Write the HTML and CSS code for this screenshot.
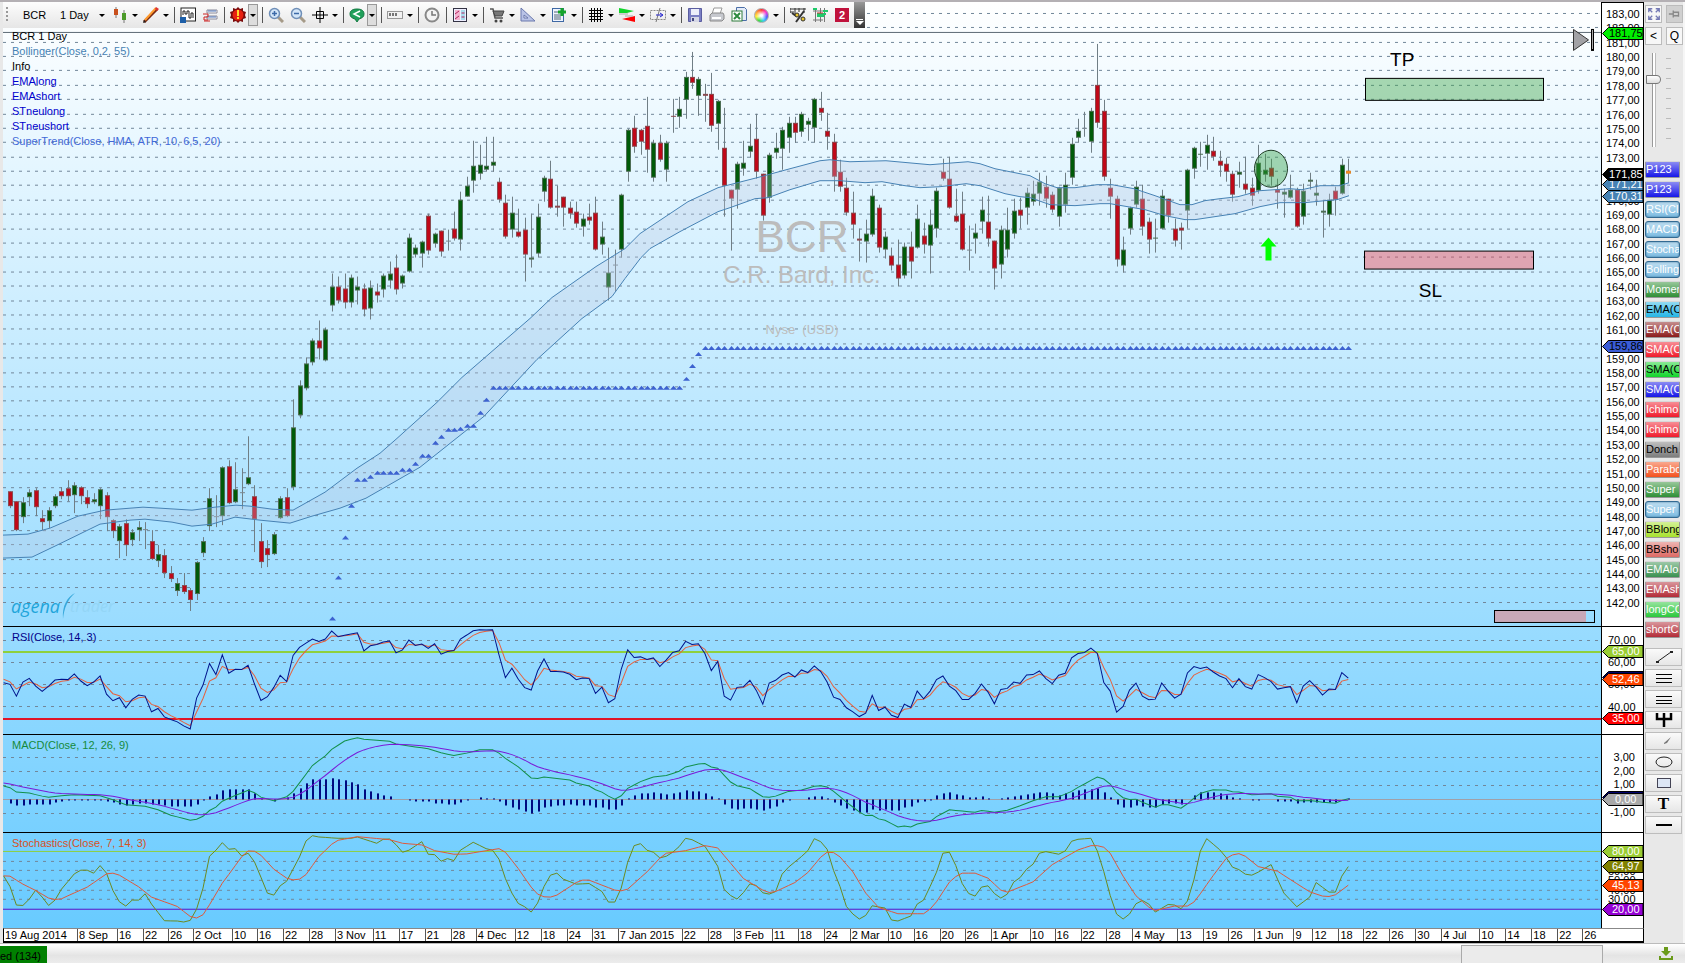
FILE: index.html
```html
<!DOCTYPE html>
<html lang="en">
<head>
  <meta charset="UTF-8" />
  <meta name="viewport" content="width=device-width, initial-scale=1.0"/>
  <title>BCR 1 Day - AgenaTrader</title>
  <link rel="stylesheet" href="styles.css">
</head>
<body>

  <div class="workspace">
    <main class="chart">

      <!-- Toolbar floats over the price pane -->
      <div class="toolbar" role="toolbar" aria-label="Chart toolbar">
        <span class="grip"></span>
        <input class="symbol" type="text" value="BCR" aria-label="Symbol">
        <button class="period">1 Day</button>
        <button class="drop period-drop" aria-label="Period"></button>

        <span class="split"><button class="tool" aria-label="Chart style"><svg viewBox="0 0 16 16"><path d="M4 0v11M12 3v13" stroke="#777"/><rect x="2" y="2" width="4" height="6" fill="#c8501e"/><rect x="10" y="6" width="4" height="7" fill="#4c9a2a"/></svg></button><button class="drop" aria-label="More chart styles"></button></span>
        <span class="split"><button class="tool" aria-label="Draw"><svg viewBox="0 0 16 16"><path d="M1 15L14 2" stroke="#7a2a12" stroke-width="3"/><path d="M2 13L13 1" stroke="#ff9a2e" stroke-width="2"/><path d="M0 16l3-1-2-2z" fill="#222"/><path d="M13 0l3 2-2 2-2-2z" fill="#d33"/></svg></button><button class="drop" aria-label="More drawing tools"></button></span>
        <i class="sep"></i>
        <button class="tool" aria-label="Indicators"><svg viewBox="0 0 16 16"><rect x="1" y="1" width="14.500" height="13" fill="#fff" stroke="#222"/><path d="M3 8V4h2v3h2V4h2v7h2V6h2v5" fill="none" stroke="#222"/><rect x="0" y="10" width="6" height="6" fill="#1d5fa8"/></svg></button>
        <button class="tool" aria-label="Strategies"><svg viewBox="0 0 16 16"><path d="M5 3h10v3H5zM5 9h10v3H5z" fill="#fff" stroke="#889"/><path d="M6 4h8M6 10h8" stroke="#4a72b8"/><path d="M1 7h5v3H2v3h4M2 14h6" fill="none" stroke="#c22"/></svg></button>
        <i class="sep"></i>
        <span class="split"><button class="tool" aria-label="Alerts"><svg viewBox="0 0 16 16"><path d="M8 0l2 2 3-1 0 3 3 1-1 3 1 3-3 1 0 3-3-1-2 2-2-2-3 1 0-3-3-1 1-3-1-3 3-1 0-3 3 1z" fill="#7a0c0c"/><circle cx="8" cy="8" r="5.500" fill="#e82010"/><path d="M8 3v6M8 10v2" stroke="#ffd92e" stroke-width="2"/></svg></button><button class="drop boxed" aria-label="Alert options"></button></span>
        <i class="sep"></i>
        <button class="tool" aria-label="Zoom in"><svg viewBox="0 0 16 16"><path d="M10 10l5 5" stroke="#a59a88" stroke-width="3"/><circle cx="6.500" cy="6.500" r="5" fill="#d3e6f8" stroke="#6f8fb8" stroke-width="1.500"/><path d="M4 6.500h5M6.500 4v5" stroke="#3c6aa8" stroke-width="1.500"/></svg></button>
        <button class="tool" aria-label="Zoom out"><svg viewBox="0 0 16 16"><path d="M10 10l5 5" stroke="#a59a88" stroke-width="3"/><circle cx="6.500" cy="6.500" r="5" fill="#d3e6f8" stroke="#6f8fb8" stroke-width="1.500"/><path d="M4 6.500h5" stroke="#3c6aa8" stroke-width="1.500"/></svg></button>
        <span class="split"><button class="tool" aria-label="Crosshair"><svg viewBox="0 0 16 16"><path d="M8 0v16M0 8h16" stroke="#000"/><path d="M4.500 4.500h7v7h-7z" fill="none" stroke="#000"/></svg></button><button class="drop" aria-label="Crosshair options"></button></span>
        <i class="sep"></i>
        <span class="split"><button class="tool" aria-label="Share"><svg viewBox="0 0 16 16"><path d="M8 2c5 0 7 2 7 5s-2 4-5 5l-2 3-2-3c-3-1-5-2-5-5s2-5 7-5z" fill="#1fa05a" stroke="#157a43"/><path d="M11 4L5 7l6 3" fill="none" stroke="#fff" stroke-width="1.500"/></svg></button><button class="drop boxed" aria-label="Share options"></button></span>
        <i class="sep"></i>
        <span class="split"><button class="tool" aria-label="Bar spacing"><svg viewBox="0 0 16 16"><rect x=".5" y="4.500" width="15" height="7" fill="#f2f2f2" stroke="#999"/><path d="M3 6v3M6 6v3M9 6v3" stroke="#777" stroke-width="2"/></svg></button><button class="drop" aria-label="Spacing options"></button></span>
        <i class="sep"></i>
        <button class="tool" aria-label="Time"><svg viewBox="0 0 16 16"><circle cx="8" cy="8" r="6.500" fill="#f4f4f4" stroke="#888" stroke-width="2"/><path d="M8 4v4h4" fill="none" stroke="#777" stroke-width="1.500"/></svg></button>
        <i class="sep"></i>
        <span class="split"><button class="tool" aria-label="Templates"><svg viewBox="0 0 16 16"><rect x="1.500" y="1.500" width="13" height="13" fill="#eef" stroke="#334"/><rect x="3" y="3" width="5" height="10" fill="#f2b4d0"/><rect x="9" y="3" width="4" height="10" fill="#a9dcec"/><path d="M3 7l4-3M3 12l4-3M9.500 6h3M9.500 10h3" stroke="#b2225e"/></svg></button><button class="drop" aria-label="More templates"></button></span>
        <i class="sep"></i>
        <span class="split"><button class="tool" aria-label="Orders"><svg viewBox="0 0 16 16"><path d="M1 2h3l2 9h8" fill="none" stroke="#555" stroke-width="1.500"/><path d="M4 4h11l-2 5H6z" fill="#777" stroke="#444"/><circle cx="7" cy="14" r="1.500" fill="#444"/><circle cx="12" cy="14" r="1.500" fill="#444"/></svg></button><button class="drop" aria-label="Order options"></button></span>
        <span class="split"><button class="tool" aria-label="Measure"><svg viewBox="0 0 16 16"><path d="M1 1v13h14z" fill="#b9c3e6" stroke="#6a78ad"/><path d="M4 8v3h4z" fill="#f4f5fb" stroke="#6a78ad"/></svg></button><button class="drop" aria-label="Measure options"></button></span>
        <span class="split"><button class="tool" aria-label="Add note"><svg viewBox="0 0 16 16"><rect x="1.500" y="1.500" width="11" height="13" fill="#eef4ff" stroke="#3e68a4"/><path d="M3 5h5M3 8h7M3 10h7M3 12h7" stroke="#567"/><path d="M11 1v8M7 5h8" stroke="#15a52a" stroke-width="3"/></svg></button><button class="drop" aria-label="Note options"></button></span>
        <i class="sep"></i>
        <span class="split"><button class="tool" aria-label="Grid"><svg viewBox="0 0 16 16"><path d="M3.500 1v14M6.500 1v14M9.500 1v14M12.500 1v14M1 3.500h14M1 6.500h14M1 9.500h14M1 12.500h14" stroke="#000"/></svg></button><button class="drop" aria-label="Grid options"></button></span>
        <span class="split"><button class="tool" aria-label="Signals"><svg viewBox="0 0 16 16"><path d="M0 1l15 3-7 2H0z" fill="#11d52b"/><path d="M16 9v6L3 12z" fill="#f00"/><path d="M0 7h9M6 9h8" stroke="#aaa"/></svg></button><button class="drop" aria-label="Signal options"></button></span>
        <span class="split"><button class="tool" aria-label="Position"><svg viewBox="0 0 16 16"><path d="M.5 3.500h15v9H.5z" fill="none" stroke="#888" stroke-dasharray="2 1"/><path d="M6 15L10 1" stroke="#777"/><path d="M6 8h6M10 6l3 2-3 2" fill="none" stroke="#22c"/></svg></button><button class="drop" aria-label="Position options"></button></span>
        <i class="sep"></i>
        <button class="tool" aria-label="Save"><svg viewBox="0 0 16 16"><path d="M1.500 1.500h13v13h-13z" fill="#7b7fc4" stroke="#5a5da0"/><rect x="4" y="2" width="8" height="6" fill="#eceefa"/><rect x="4" y="10" width="8" height="5" fill="#d5d7e6"/><rect x="5" y="11" width="2" height="3" fill="#44487e"/></svg></button>
        <button class="tool" aria-label="Print"><svg viewBox="0 0 16 16"><path d="M5 1h8l-2 6H3z" fill="#fff" stroke="#999"/><path d="M1 8l2-2h11l1 2v4l-2 2H1z" fill="#c6c8ce" stroke="#888"/><path d="M3 11h9" stroke="#fff" stroke-width="2"/></svg></button>
        <button class="tool" aria-label="Export to Excel"><svg viewBox="0 0 16 16"><path d="M5.500.5h8l2 2v11h-10z" fill="#e4ebf8" stroke="#4b6ea8"/><rect x="1" y="4" width="10" height="10" fill="#fff" stroke="#2d7a3a"/><path d="M3 6l6 6M9 6l-6 6" stroke="#2d8a3e" stroke-width="2"/></svg></button>
        <span class="split"><button class="tool" aria-label="Colors"><span class="wheel"></span></button><button class="drop" aria-label="Color options"></button></span>
        <i class="sep"></i>
        <button class="tool" aria-label="Percent scale"><svg viewBox="0 0 16 16"><path d="M0 2h16M0 5h4M0 1v5M5 1v7M9 1v4M14 1v5" stroke="#333"/><path d="M2 6l4 3 2-2M6 15L14 4" fill="none" stroke="#333" stroke-width="2"/><circle cx="7" cy="8" r="2" fill="#e8c42c" stroke="#333"/><circle cx="13" cy="12" r="2" fill="#e8c42c" stroke="#333"/></svg></button>
        <button class="tool" aria-label="Volume profile"><svg viewBox="0 0 16 16"><path d="M3.500 1v14M8.500 1v14M12.500 1v14M1 4h14M1 13h10" stroke="#777"/><path d="M1 2h4M5 7h9M5 9h7M11 4h5" stroke="#1fc96a" stroke-width="2"/><path d="M5 6h6" stroke="#c33"/></svg></button>
        <button class="tool badge" aria-label="Level 2">2</button>
        <button class="overflow" aria-label="Toolbar options"></button>
      </div>

      <!-- Price -->
      <section class="pane pane-price">
        <div class="plot">
          <svg class="layer" id="price" viewBox="3 2 1598 625" preserveAspectRatio="none"></svg>
          <ul class="legend">
            <li>BCR 1 Day</li>
            <li class="c-steel">Bollinger(Close, 0,2, 55)</li>
            <li>Info</li>
            <li class="c-blue">EMAlong</li>
            <li class="c-blue">EMAshort</li>
            <li class="c-blue">STneulong</li>
            <li class="c-blue">STneushort</li>
            <li class="c-royal">SuperTrend(Close, HMA, ATR, 10, 6,5, 20)</li>
          </ul>
          <div class="watermark">
            <p class="wm-symbol">BCR</p>
            <p class="wm-name">C.R. Bard, Inc.</p>
            <p class="wm-market">Nyse &nbsp;(USD)</p>
          </div>
          <span class="note note-tp">TP</span>
          <span class="note note-sl">SL</span>
          <div class="logo"><b>agena</b><svg viewBox="0 0 16 28"><path d="M15 1C7 5 2 14 3 27 4 16 8 7 15 1z" fill="#39a9dc"/></svg><span>trader</span></div>
        </div>
        <div class="scale" id="scale-price"></div>
      </section>

      <!-- RSI -->
      <section class="pane pane-rsi">
        <div class="plot">
          <svg class="layer" id="rsi" viewBox="3 628 1598 106" preserveAspectRatio="none"></svg>
          <p class="title c-navy">RSI(Close, 14, 3)</p>
        </div>
        <div class="scale" id="scale-rsi"></div>
      </section>

      <!-- MACD -->
      <section class="pane pane-macd">
        <div class="plot">
          <svg class="layer" id="macd" viewBox="3 735 1598 97" preserveAspectRatio="none"></svg>
          <p class="title c-green">MACD(Close, 12, 26, 9)</p>
        </div>
        <div class="scale" id="scale-macd"></div>
      </section>

      <!-- Stochastics -->
      <section class="pane pane-stoch">
        <div class="plot">
          <svg class="layer" id="stoch" viewBox="3 833 1598 95" preserveAspectRatio="none"></svg>
          <p class="title c-orange">Stochastics(Close, 7, 14, 3)</p>
        </div>
        <div class="scale" id="scale-stoch"></div>
      </section>

      <div class="timeline" id="timeline"></div>
    </main>

    <aside class="sidebar">
      <div class="view-buttons">
        <button aria-label="Full screen"><svg viewBox="0 0 16 16"><path d="M2 6V2h4M2 2l4 4M10 2h4v4M14 2l-4 4M2 10v4h4M2 14l4-4M14 10v4h-4M14 14l-4-4" fill="none" stroke="#7479b4" stroke-width="1.500"/></svg></button>
        <button class="off" aria-label="Pin"><svg viewBox="0 0 16 16"><path d="M1 8h5M6 4v8M6 6h6v4H6M12 5v6" fill="none" stroke="#888" stroke-width="1.500"/></svg></button>
        <button>&lt;</button>
        <button>Q</button>
      </div>
      <div class="zoomer">
        <input type="range" min="0" max="100" value="26" aria-label="Bar width">
        <span class="notches"></span>
      </div>
      <div class="indicators" id="indicators"></div>
      <div class="draw-tools">
        <button aria-label="Trend line"><svg viewBox="0 0 20 14"><path d="M3 12L17 2" stroke="#222"/><path d="M2 11h3v2H2zM16 1h3v2h-3z" fill="#222"/></svg></button>
        <button aria-label="Fibonacci retracement"><svg viewBox="0 0 20 14"><path d="M2 3.500h16M2 7.500h16M2 11.500h16" stroke="#000"/></svg></button>
        <button aria-label="Fibonacci extension"><svg viewBox="0 0 20 14"><path d="M2 4.500h16M2 8.500h16M2 11.500h16" stroke="#000"/></svg></button>
        <button aria-label="Pitchfork"><svg viewBox="0 0 20 14"><path d="M10 0v14M3 0v6h14V0" fill="none" stroke="#000" stroke-width="2.500"/></svg></button>
        <button aria-label="Ray"><svg viewBox="0 0 20 14"><path d="M10 9l7-6-4 6-3 1z" fill="#777"/></svg></button>
        <button aria-label="Ellipse"><svg viewBox="0 0 20 14"><ellipse cx="10" cy="7" rx="8" ry="5" fill="none" stroke="#222"/></svg></button>
        <button aria-label="Rectangle"><svg viewBox="0 0 20 14"><rect x="3.500" y="2.500" width="13" height="9" fill="#dde6f5" stroke="#445"/></svg></button>
        <button class="type" aria-label="Text">T</button>
        <button aria-label="Horizontal line"><svg viewBox="0 0 20 14"><path d="M2 7h16" stroke="#000" stroke-width="2"/></svg></button>
      </div>
    </aside>
  </div>

  <footer class="statusbar">
    <span class="feed">ed (134)</span>
    <span class="status-panel"></span>
    <button class="download" aria-label="Download"><svg viewBox="0 0 14 14"><path d="M5 0h4v4h3l-5 5-5-5h3z" fill="#6a9a1a"/><path d="M1 9v3h12V9" fill="none" stroke="#6a9a1a" stroke-width="2"/></svg></button>
  </footer>

  <script src="chart.js"></script>
</body>
</html>
```
FILE: styles.css
```css
* {
  box-sizing: border-box;
  margin: 0;
  padding: 0;
}

body {
  display: flex;
  flex-direction: column;
  height: 100vh;
  min-height: 600px;
  background: #e8e8e8;
  color: #000;
  font-family: "Liberation Sans", Arial, sans-serif;
  font-size: 11px;
  overflow: hidden;
}

button,
input {
  font: inherit;
  border: 0;
  background: none;
}

ul {
  list-style: none;
}

.workspace {
  flex: 1;
  display: flex;
  min-height: 0;
  padding: 2px 0 0 3px;
  background: #e8e8e8;
  box-shadow: inset 0 2px #b4b0b4;
}

.chart {
  position: relative;
  flex: 1;
  min-width: 0;
  display: flex;
  flex-direction: column;
  background: linear-gradient(#ffffff, #66caff);
}

/* Toolbar */
.toolbar {
  position: absolute;
  top: 0;
  left: 0;
  z-index: 5;
  display: flex;
  align-items: center;
  gap: 2px;
  height: 26px;
  background: linear-gradient(#fdfdfd, #e6e6e6);
}

.grip {
  width: 2px;
  height: 16px;
  margin-left: 3px;
  background: repeating-linear-gradient(#999 0 2px, transparent 2px 4px);
}

.symbol {
  width: 48px;
  height: 20px;
  padding-left: 13px;
}

.period {
  width: 35px;
  text-align: left;
}

.split {
  display: flex;
  align-items: center;
}

.tool {
  display: flex;
  align-items: center;
  justify-content: center;
  width: 20px;
  height: 22px;
}

.tool svg {
  width: 16px;
  height: 16px;
}

.drop {
  display: flex;
  align-items: center;
  justify-content: center;
  width: 9px;
  height: 22px;
}

.drop::after {
  content: "";
  border: 3px solid transparent;
  border-top-color: #000;
  border-bottom: 0;
}

.period-drop {
  margin-right: 2px;
}

.drop.boxed {
  width: 10px;
  border: 1px solid #999;
  background: #ddd;
}

.sep {
  width: 4px;
  height: 16px;
  background: linear-gradient(#555, #555) center / 1px 100% no-repeat;
}

.wheel {
  width: 15px;
  height: 15px;
  border-radius: 50%;
  border: 1px solid #aaa;
  background: radial-gradient(#fff 10%, transparent 60%), conic-gradient(#f33, #f3c, #55f, #3cf, #3d4, #fe3, #f93, #f33);
}

.badge {
  width: 14px;
  height: 14px;
  margin: 0 3px;
  background: #c0123c;
  color: #fff;
  font-weight: bold;
}

.overflow {
  width: 11px;
  height: 26px;
  background: linear-gradient(#999, #333);
  display: flex;
  flex-direction: column;
  align-items: center;
  justify-content: flex-end;
  padding-bottom: 3px;
}

.overflow::before {
  content: "";
  width: 7px;
  height: 1px;
  margin-bottom: 1px;
  background: #fff;
}

.overflow::after {
  content: "";
  border: 4px solid transparent;
  border-top-color: #fff;
  border-bottom: 0;
}

/* Panes */
.pane {
  display: flex;
  min-height: 0;
  border-bottom: 1px solid #000;
}

.pane-price { flex: 626 1 0; }
.pane-rsi { flex: 107 1 0; }
.pane-macd { flex: 98 1 0; }
.pane-stoch { flex: 95 1 0; border-bottom: 0; }

.plot {
  position: relative;
  flex: 1;
  min-width: 0;
  overflow: hidden;
}

.layer {
  position: absolute;
  inset: 0;
  width: 100%;
  height: 100%;
}

.legend {
  position: relative;
  padding: 27px 0 0 9px;
  line-height: 15px;
}

.title {
  position: relative;
  padding: 3px 0 0 9px;
  line-height: 14px;
}

.c-steel { color: #4682b4; }
.c-blue { color: #0000cd; }
.c-royal { color: #4169d8; }
.c-navy { color: #00008b; }
.c-green { color: #158a3c; }
.c-orange { color: #d9501e; }

.watermark {
  position: absolute;
  top: 34%;
  left: 50%;
  transform: translateX(-50%);
  color: #bcbcbc;
  text-align: center;
  white-space: nowrap;
}

.wm-symbol { font-size: 44px; line-height: 46px; }
.wm-name { font-size: 24px; line-height: 30px; }
.wm-market { font-size: 13px; line-height: 16px; padding-top: 32px; }

.note {
  position: absolute;
  font-size: 19px;
  line-height: 22px;
}

.note-tp { left: 86.8%; top: 7.5%; }
.note-sl { left: 88.6%; top: 44.6%; }

.logo {
  position: absolute;
  left: 8px;
  bottom: 6px;
  display: flex;
  align-items: center;
  font: italic 18px/20px "Open Sans", sans-serif;
  color: #93d5f6;
}

.logo b {
  font-weight: 400;
  color: #1fa5da;
}

.logo span {
  font-size: 16px;
}

.logo svg {
  width: 16px;
  height: 28px;
  margin: 0 -6px 0 0;
}

/* Value scales */
.scale {
  position: relative;
  width: 43px;
  border-left: 1px solid #000;
  border-right: 1px solid #000;
  background: #fff;
}

.ticks {
  display: flex;
  flex-direction: column;
  justify-content: space-between;
  height: 100%;
  line-height: 12px;
  padding-left: 4px;
}

#scale-price { border-top: 1px solid #000; }
#scale-price .ticks { padding-top: 5px; padding-bottom: 17px; }
#scale-rsi .ticks { padding: 7px 0 21px 6px; }
#scale-macd .ticks { padding: 16px 8px 14px 0; text-align: right; }
#scale-stoch .ticks { padding: 24px 0 24px 6px; line-height: 9px; }

.tag {
  position: absolute;
  left: 0;
  right: 0;
  height: 13px;
  margin-top: -7px;
  padding-left: 7px;
  line-height: 13px;
  color: #fff;
}

.tag.short { padding-left: 10px; }
.tag.wide-short { padding-left: 13px; }
.tag.dark { color: #000; }

.tag svg {
  position: absolute;
  left: 0;
  top: 0;
  width: 100%;
  height: 100%;
}

.tag span {
  position: relative;
}

.timeline {
  display: flex;
  height: 15px;
  background: #fff;
  border: 1px solid #000;
  border-top-color: #888;
  border-bottom-width: 2px;
  line-height: 12px;
  white-space: nowrap;
}

.timeline span {
  flex: none;
  border-left: 1px solid #555;
  padding-left: 1px;
}

.timeline span:first-child {
  border-left: 0;
}

/* Sidebar */
.sidebar {
  width: 41px;
  padding: 3px 2px 0 1px;
  border-right: 2px solid #f6f6f6;
}

.view-buttons {
  display: grid;
  grid-template-columns: 17px 17px;
  gap: 4px;
}

.view-buttons button {
  display: flex;
  align-items: center;
  justify-content: center;
  height: 18px;
  font-size: 12px;
  border: 1px solid #bbb;
  background: #f7f7f7;
}

.view-buttons .off {
  background: #d0d0d0;
}

.view-buttons svg {
  width: 14px;
  height: 14px;
}

.zoomer {
  display: flex;
  align-items: flex-start;
  gap: 5px;
  height: 116px;
  padding: 8px 0 0 1px;
}

.zoomer input {
  appearance: none;
  writing-mode: vertical-lr;
  width: 15px;
  height: 94px;
}

.zoomer input::-webkit-slider-runnable-track {
  width: 15px;
  height: 94px;
  background: linear-gradient(90deg, #999 0 1px, #fff 1px 3px, #bbb 3px 4px) center / 4px 100% no-repeat;
}

.zoomer input::-webkit-slider-thumb {
  appearance: none;
  width: 15px;
  height: 9px;
  background: linear-gradient(#fff, #ddd);
  border: 1px solid #777;
  border-radius: 1px 5px 5px 1px;
}

.notches {
  width: 5px;
  height: 86px;
  margin-top: 5px;
  background: repeating-linear-gradient(#bbb 0 1px, transparent 1px 10px);
}

.indicators,
.draw-tools {
  display: flex;
  flex-direction: column;
  gap: 3px;
}

.indicators button {
  width: 35px;
  height: 17px;
  overflow: hidden;
  text-align: left;
  white-space: nowrap;
  line-height: 15px;
  color: #fff;
  border: 1px solid #999;
  border-top-color: #d8d8d8;
  border-radius: 2px;
  background-image: linear-gradient(rgba(255, 255, 255, 0.5), rgba(255, 255, 255, 0));
}

.indicators .dark { color: #000; }

.indicators .on {
  border: 1px solid #336a92;
  border-radius: 3px;
  background-color: #7dbce2;
  box-shadow: inset 0 0 2px #336a92;
}

.bg-blue { background-color: #1717e8; }
.bg-green { background-color: #2f8f35; }
.bg-cyan { background-color: #25b5e6; }
.bg-maroon { background-color: #8b1c1c; }
.bg-red { background-color: #f01c2c; }
.bg-lime { background-color: #12d52a; }
.bg-gray { background-color: #7d7d7d; }
.bg-orange { background-color: #f4511e; }
.bg-yellow { background-color: #a8e22e; }
.bg-rose { background-color: #dd6a64; }
.bg-fern { background-color: #3a9150; }
.bg-brick { background-color: #b32c38; }
.bg-mint { background-color: #2cc83c; }

.draw-tools {
  padding-top: 10px;
}

.draw-tools button {
  display: flex;
  align-items: center;
  justify-content: center;
  width: 37px;
  height: 18px;
  border: 1px solid #bdbdbd;
  background: linear-gradient(#fafafa, #e6e6e6);
}

.draw-tools svg {
  width: 20px;
  height: 14px;
}

.draw-tools .type {
  font: bold 17px/16px "Liberation Serif", serif;
}

/* Status bar */
.statusbar {
  display: flex;
  align-items: flex-end;
  height: 20px;
  border-top: 1px solid #bbb;
  background: linear-gradient(#fff, #e4e4e4 60%, #ececec);
}

.feed {
  width: 47px;
  height: 17px;
  line-height: 20px;
  background: #008000;
}

.status-panel {
  width: 142px;
  height: 18px;
  margin-left: auto;
  border: 1px solid #aaa;
  border-bottom: 0;
  background: #ebebeb;
}

.download {
  width: 82px;
  height: 18px;
  padding-left: 56px;
  display: flex;
  align-items: center;
}

.download svg {
  width: 14px;
  height: 14px;
}
```
FILE: chart.js
```javascript
// All panes share one coordinate space, each svg shows its own slice of it.
const FIRST_BAR = 10;
const BAR_STEP = 6.434;
const LEFT = 3;
const RIGHT = 1601;

const barX = i => Math.max(LEFT, FIRST_BAR + i * BAR_STEP);
const sampleY = v => 620 + v / 3;
const priceY = p => 13.3 + (183 - p) * 14.39;

// high, body top, body bottom, low, direction
const candles = `
492 492 507 509 r|502 502 531 532 r|498 503 518 524 g|490 493 498 507 g|489 491 508 517 r|511 519 523 531 r|508 511 522 529 g|495 497 507 509 g|488 492 497 500 r|481 489 497 502 r
483 486 496 514 g|487 488 497 505 r|491 498 505 509 r|494 500 503 505 g|489 490 507 520 g|493 496 518 532 r|520 521 532 539 r|525 527 542 559 g|520 524 546 557 r|530 533 541 547 g
522 528 531 542 g|523 530 531 550 d|531 542 560 561 r|546 555 562 568 g|550 556 574 579 r|567 574 580 583 r|579 584 592 597 g|574 586 593 595 r|589 591 601 612 r|562 563 595 601 g
538 542 554 558 g|489 499 527 532 g|496 517 518 528 d|467 468 517 526 g|461 467 504 505 r|463 490 503 504 g|469 493 494 510 d|437 478 485 486 g|486 497 520 553 r|524 542 563 569 r
541 549 556 568 r|533 535 555 556 g|497 499 519 520 g|489 498 517 518 r|400 428 488 491 g|381 386 416 419 g|358 364 389 391 g|339 341 363 366 g|321 341 349 360 r|328 330 361 362 g
274 287 306 312 g|277 287 301 304 r|274 289 303 309 r|275 278 303 308 g|277 287 291 305 g|284 289 310 317 r|281 288 309 320 g|284 292 296 303 r|274 276 290 298 g|262 274 281 289 g
255 268 290 295 r|275 276 284 289 g|234 238 272 273 g|245 248 255 258 g|241 242 254 268 g|214 216 251 255 r|233 234 244 248 g|231 231 252 257 r|230 241 242 251 d|212 229 239 241 r
192 200 240 251 g|177 186 197 197 g|141 166 181 193 g|145 165 174 180 g|137 166 170 172 g|137 162 166 172 g|178 182 200 203 r|195 203 237 239 r|197 213 230 238 g|209 232 237 238 r
218 230 255 282 r|214 258 260 268 g|204 217 254 258 g|176 178 192 202 g|161 179 208 209 r|186 206 208 217 r|197 197 208 227 r|202 208 214 219 r|202 212 224 228 r|214 219 227 237 g
204 217 221 225 r|197 213 250 251 r|222 237 245 255 g|248 273 288 301 g|250 265 266 292 d|194 195 250 258 g|129 130 172 182 g|116 128 147 153 r|129 130 142 155 r|97 126 150 173 r
140 143 178 182 g|135 143 160 162 r|141 143 170 182 g|99 116 117 133 r|97 109 117 128 g|72 77 100 119 g|52 77 83 89 r|77 79 96 116 g|84 94 96 122 r|73 94 126 132 r
100 101 124 150 g|108 148 186 217 r|190 190 199 251 r|162 164 190 209 g|141 163 169 176 g|124 146 152 158 g|114 139 172 179 r|174 174 216 221 r|153 155 198 203 g|133 148 153 159 g
127 130 149 170 g|117 123 138 153 g|117 123 133 143 r|112 114 132 137 g|118 121 125 141 g|98 99 128 143 g|92 108 113 121 r|113 131 137 150 r|134 142 177 192 r|160 172 187 192 r
178 188 213 216 r|192 213 225 239 r|229 239 241 262 r|220 234 242 263 g|189 196 235 237 g|205 208 248 253 r|232 237 250 259 g|248 256 266 271 r|240 265 279 287 r|243 247 276 279 g
232 247 262 279 r|205 219 248 249 g|223 236 245 254 r|210 225 246 274 g|188 191 229 238 g|159 172 179 181 r|157 179 208 209 r|189 216 222 223 r|192 214 250 251 r|226 250 251 271 d
224 233 239 254 g|197 210 222 234 g|196 222 239 247 r|241 241 269 290 r|226 230 265 279 g|208 230 250 258 g|199 211 234 239 g|198 210 216 229 r|188 193 208 225 g|181 194 202 206 g
173 182 194 206 g|176 187 199 208 r|192 195 210 213 r|187 188 217 227 g|173 185 205 213 g|138 144 178 185 g|119 131 138 143 g|112 128 129 137 d|108 111 142 153 g|44 85 123 128 r
100 111 177 181 r|179 188 197 219 r|196 199 260 267 r|237 250 266 273 g|207 208 229 235 g|181 187 205 208 g|185 199 227 236 r|218 222 240 254 r|219 238 239 253 g|190 196 229 230 g
199 199 216 223 r|219 229 241 247 r|223 228 231 250 r|169 170 211 229 g|147 148 169 179 g|142 154 155 167 g|135 145 154 170 g|137 151 157 161 r|151 161 166 177 r|158 164 172 182 r
171 174 195 202 r|162 172 175 188 g|157 184 190 194 r|178 188 196 206 r|145 163 191 194 g|154 170 175 182 g|159 168 177 186 r|179 190 193 209 r|189 192 195 218 g|175 190 198 199 g
188 190 227 228 r|184 191 217 225 g|173 180 182 190 g|180 193 196 206 g|201 211 213 238 g|194 200 215 227 g|187 191 200 216 r|159 165 194 195 g|159 171 174 183 o
`.trim().split(/[|\n]/);

const bandUpper = '3,536 28,535 50,529 78,517 105,511 143,508 160,509 192,511 215,508 236,506 250,507 272,510 293,511 325,493 357,469 380,454 396,440 437,403 462,378 500,345 530,319 552,298 596,267 625,249 640,234 670,214 688,202 718,188 757,178 790,169 820,161 830,160 850,162 886,161 930,165 955,163 968,162 980,164 995,169 1030,176 1045,184 1057,188 1075,188 1097,185 1112,185 1134,189 1155,196 1180,205 1192,205 1205,201 1220,199 1238,197 1260,191 1290,189 1302,190 1320,186 1340,186 1349,183';
const bandLower = '3,559 32,558 55,547 100,525 130,521 145,520 172,523 192,527 212,525 235,518 260,521 290,524 312,517 340,509 366,499 420,468 484,417 537,360 582,319 612,297 625,279 641,258 650,249 680,232 718,212 730,208 755,199 768,198 790,190 820,181 840,181 865,183 882,182 905,186 920,188 940,187 966,184 980,186 1005,194 1020,197 1030,198 1050,205 1075,206 1100,204 1110,204 1145,210 1165,216 1185,220 1195,220 1235,214 1260,207 1280,203 1305,203 1325,201 1337,200 1349,196';

// SuperTrend markers, first one belongs to bar 50
const superTrend = [620, 579, 539, 507, 481, 481, 478, 474, 474, 474, 474, 471, 471, 465, 457, 457, 444, 438, 431, 431, 430, 427, 427, 414, 401]
  .concat(Array(30).fill(389), [380, 367, 355], Array(101).fill(349));

// Indicator samples start one bar before the first candle
const rsi = [190,195,230,188,177,200,216,200,182,180,181,164,185,199,188,170,224,244,235,265,240,227,230,277,267,292,300,307,319,328,
  236,197,133,166,107,162,150,151,138,194,243,232,204,168,187,109,85,72,60,67,60,36,53,49,45,41,95,80,76,69,66,101,92,63,79,75,88,74,105,97,94,60,48,35,32,33,32,
  107,175,147,180,205,212,155,119,157,157,158,165,181,176,178,222,203,250,238,150,92,115,113,121,116,142,122,100,95,67,76,74,103,154,127,230,242,204,202,183,213,254,
  191,183,167,160,173,152,160,140,157,188,233,240,265,277,291,281,228,273,263,287,294,254,264,215,238,215,181,170,200,214,240,240,222,194,218,253,210,207,188,192,
  167,166,155,178,193,168,162,116,103,100,87,103,190,215,278,261,212,191,230,241,239,191,215,236,224,161,142,148,143,158,170,178,205,178,202,209,166,175,187,209,
  205,202,250,200,184,203,227,209,210,160,176];

const macdKnots = '-1:497 0:502 1:515 3:518 5:527 6:530 8:526 10:523 14:526 16:538 18:553 21:557 23:568 25:584 27:594 28:599 29:596 30:587 31:570 32:560 33:542 35:525 37:510 38:517 39:530 41:541 43:529 44:513 46:462 47:436 49:407 50:388 52:363 54:353 55:358 59:364 60:372 65:386 67:398 69:406 71:399 73:389 75:389 76:399 77:415 79:440 81:473 82:475 83:470 85:475 87:479 88:488 90:497 91:508 92:515 93:527 94:536 95:526 96:504 98:484 100:470 102:466 104:453 105:440 107:431 108:430 109:440 110:444 111:465 112:485 113:496 115:505 117:529 118:530 119:527 121:513 123:509 125:498 126:496 127:500 128:513 130:545 132:574 133:585 134:584 135:595 136:599 138:619 139:616 140:619 141:610 143:603 144:588 146:568 150:575 151:570 153:575 155:569 157:556 159:541 161:529 163:529 165:513 166:501 169:470 170:476 171:491 172:517 173:532 174:537 175:536 176:545 178:560 179:553 180:553 182:563 183:550 184:533 185:519 187:508 189:509 190:514 191:515 193:523 196:520 197:527 199:530 200:541 202:540 204:545 206:548 207:540 208:535';
const stochK = '-1:768 0:800 1:856 2:857 3:838 4:811 5:832 6:857 7:841 8:808 10:762 11:751 12:751 13:760 14:737 15:760 16:812 17:846 18:859 19:841 20:841 21:822 22:853 24:903 26:904 27:907 28:902 29:868 30:805 31:709 32:691 33:668 34:688 35:686 36:708 37:700 38:726 39:772 40:820 41:826 42:798 43:784 45:711 46:663 47:647 48:651 51:655 53:655 54:651 57:670 58:658 59:657 60:674 61:697 62:691 64:665 65:703 66:704 67:724 68:716 69:722 70:691 72:667 74:686 75:691 76:718 77:776 78:820 79:851 80:861 81:877 82:850 83:800 84:766 85:760 86:778 88:793 90:791 92:815 93:847 94:847 95:805 96:727 97:677 98:671 99:691 100:697 101:714 102:709 103:697 104:680 105:655 106:659 108:679 110:739 111:809 112:827 113:838 114:818 115:792 116:797 117:819 118:823 119:815 120:763 121:742 123:710 124:692 125:656 126:665 127:688 128:752 129:800 130:860 131:883 132:898 133:887 134:858 136:865 137:901 138:904 140:889 141:853 142:841 143:800 144:757 145:700 146:697 147:737 148:791 149:821 150:829 151:802 152:798 153:821 154:835 155:823 156:787 157:773 158:748 159:733 160:700 161:695 163:703 164:693 165:664 166:658 168:655 169:693 170:755 171:827 172:883 173:898 174:883 175:852 176:842 177:853 178:877 180:854 181:856 182:867 183:844 184:780 185:694 186:656 188:689 189:712 190:742 191:749 192:763 193:766 194:757 196:734 197:778 198:820 200:861 202:832 203:788 205:817 206:817 207:769 208:740';
const stochD = '-1:768 0:769 2:793 4:812 6:835 7:839 8:837 9:828 12:802 15:762 16:760 17:766 20:801 22:832 26:860 28:890 29:895 30:885 31:855 33:790 36:711 37:693 38:694 39:706 41:748 43:775 44:780 45:778 46:764 48:710 50:673 51:661 54:650 59:659 61:670 64:675 66:692 69:703 71:702 75:689 76:686 77:697 79:746 81:802 82:823 83:831 84:832 85:826 88:788 89:781 90:781 94:811 95:813 96:808 99:756 101:715 102:700 105:692 108:677 110:684 112:730 114:776 117:811 118:818 119:815 122:788 124:758 126:712 127:697 128:698 129:711 131:756 133:820 135:863 138:882 142:882 143:868 144:846 146:787 147:770 148:760 150:760 152:775 154:811 155:817 158:794 159:786 162:734 166:690 168:677 169:677 170:682 171:700 173:769 175:828 177:862 178:872 179:868 181:859 183:859 184:847 185:822 187:767 189:716 190:705 191:701 192:709 194:740 197:754 199:779 202:816 204:829 205:830 206:825 207:811 208:796';

const dates = [['19 Aug 2014', 4], ['8 Sep', 77], ['16', 117], ['22', 143], ['26', 168], ['2 Oct', 193], ['10', 232], ['16', 257], ['22', 283], ['28', 309], ['3 Nov', 335], ['11', 373], ['17', 399], ['21', 425], ['28', 451], ['4 Dec', 476], ['12', 515], ['18', 541], ['24', 567], ['31', 592], ['7 Jan 2015', 618], ['22', 682], ['28', 708], ['3 Feb', 734], ['11', 772], ['18', 798], ['24', 824], ['2 Mar', 850], ['10', 888], ['16', 914], ['20', 940], ['26', 965], ['1 Apr', 991], ['10', 1030], ['16', 1055], ['22', 1081], ['28', 1107], ['4 May', 1133], ['13', 1178], ['19', 1204], ['26', 1229], ['1 Jun', 1255], ['9', 1294], ['12', 1313], ['18', 1339], ['22', 1364], ['26', 1390], ['30', 1416], ['4 Jul', 1442], ['10', 1480], ['14', 1506], ['18', 1532], ['22', 1558], ['26', 1583]];

const indicatorButtons = [['P123', 'bg-blue'], ['P123', 'bg-blue'], ['RSI(Cl', 'on'], ['MACD', 'on'], ['Stocha', 'on'], ['Bolling', 'on'], ['Momen', 'bg-green'], ['EMA(C', 'bg-cyan dark'], ['EMA(C', 'bg-maroon'], ['SMA(C', 'bg-red'], ['SMA(C', 'bg-lime dark'], ['SMA(C', 'bg-blue'], ['Ichimo', 'bg-red'], ['Ichimo', 'bg-red'], ['Donch', 'bg-gray dark'], ['Parabo', 'bg-orange'], ['Super', 'bg-green'], ['Super', 'on'], ['BBlong', 'bg-yellow dark'], ['BBsho', 'bg-rose dark'], ['EMAlo', 'bg-fern'], ['EMAsh', 'bg-brick'], ['longCC', 'bg-mint'], ['shortC', 'bg-brick']];

// Helpers
function line(y, color, width, dash) {
  return `<path d="M${LEFT} ${y}H${RIGHT}" stroke="${color}" stroke-width="${width}"${dash ? ' stroke-dasharray="3 5"' : ''} shape-rendering="crispEdges"/>`;
}

function grid(rows) {
  return rows.map(y => line(Math.floor(y) + 0.5, '#71879a', 1, true)).join('');
}

function expand(knots) {
  const points = knots.split(' ').map(k => k.split(':').map(Number));
  const out = [];
  for (let n = 0; n < points.length - 1; n++) {
    const [i, a] = points[n];
    const [j, b] = points[n + 1];
    for (let k = i; k < j; k++) out.push(a + (b - a) * (k - i) / (j - i));
  }
  out.push(points[points.length - 1][1]);
  return out;
}

function ema(values, start, alpha) {
  let last = start;
  return values.map((v, n) => last = n ? last + (v - last) * alpha : start);
}

function curve(values, color) {
  const points = values.map((v, n) => `${barX(n - 1).toFixed(1)},${sampleY(v).toFixed(1)}`).join(' ');
  return `<polyline points="${points}" fill="none" stroke="${color}"/>`;
}

// Price pane
function drawPrice() {
  const rows = [];
  for (let p = 183; p >= 142; p--) rows.push(priceY(p));
  const fill = { g: '#005a08', r: '#c00818', d: '#7b8890', o: '#ff8c1a' };
  const edge = { g: '#4e6e55', r: '#8a4a50', d: '#7b8890', o: '#e0862a' };

  let svg = grid(rows) + line(32.5, '#5c6a74', 1);
  candles.forEach((row, i) => {
    const [high, top, bottom, low, dir] = row.split(' ');
    const x = Math.round(barX(i));
    const h = Math.max(1, bottom - top);
    svg += `<path d="M${x + 0.5} ${high}V${low}" stroke="#6f7d85" shape-rendering="crispEdges"/>`;
    svg += `<rect x="${x - 2}" y="${top}" width="5" height="${h}" fill="${edge[dir]}"/>`;
    if (h > 2) svg += `<rect x="${x - 1}" y="${+top + 1}" width="3" height="${h - 2}" fill="${fill[dir]}"/>`;
  });

  svg += `<polygon points="${bandUpper} ${bandLower.split(' ').reverse().join(' ')}" fill="rgba(186,200,226,0.3)"/>`;
  svg += `<polyline points="${bandUpper}" fill="none" stroke="#4682b4"/>`;
  svg += `<polyline points="${bandLower}" fill="none" stroke="#4682b4"/>`;

  superTrend.forEach((y, n) => {
    const x = Math.round(barX(n + 50)) + 0.5;
    svg += `<path d="M${x - 3.5} ${y + 1.5}h7l-3.500 -4z" fill="#3d62d0"/>`;
  });

  // Targets, entry marker and arrow
  svg += '<rect x="1365.5" y="78.500" width="178" height="22" fill="rgba(60,165,70,0.42)" stroke="#000"/>';
  svg += '<rect x="1364.5" y="251.500" width="169" height="18" fill="rgba(235,70,85,0.45)" stroke="#000"/>';
  svg += '<ellipse cx="1271" cy="169" rx="16.500" ry="18.500" fill="rgba(60,165,70,0.42)" stroke="#1c3a22"/>';
  svg += '<path d="M1268.5 238l8 9h-5v14h-6v-14h-5z" fill="#00ff00"/>';
  svg += '<rect x="1494" y="612" width="92" height="11" fill="#c9a8b8"/>';
  svg += '<rect x="1494.5" y="611.500" width="100" height="12" fill="none" stroke="#000"/>';
  svg += '<path d="M1573.5 29.500v21l15 -10.500z" fill="#a2a2a6" stroke="#333"/>';
  svg += '<rect x="1591.5" y="29.500" width="2" height="21" fill="#aaa" stroke="#000"/>';
  document.getElementById('price').innerHTML = svg;
}

// Indicator panes
function drawRsi() {
  document.getElementById('rsi').innerHTML =
    grid([64, 130, 196, 262].map(sampleY)) +
    line(653, '#8fd03c', 2) + line(719, '#e01428', 2) +
    curve(ema(rsi, 180, 0.5), '#e8603c') + curve(rsi, '#00148c');
}

function drawMacd() {
  const macd = expand(macdKnots);
  const signal = ema(macd, 488, 0.2);
  const zero = 799;
  let svg = grid([412, 454, 496, 577].map(sampleY)) + line(zero + 0.5, '#a0a0a8', 1);
  macd.forEach((v, n) => {
    const size = Math.round((signal[n] - v) / 3);
    const x = Math.round(barX(n - 1));
    if (n && size) svg += `<rect x="${x}" y="${size > 0 ? zero - size : zero}" width="2" height="${Math.abs(size)}" fill="#000a80"/>`;
  });
  document.getElementById('macd').innerHTML = svg + curve(macd, '#12904a') + curve(signal, '#7a1ad8');
}

function drawStoch() {
  document.getElementById('stoch').innerHTML =
    grid([723, 752, 782, 811, 839].map(sampleY)) +
    line(851.5, '#8fd03c', 1) + line(909.5, '#5a14c8', 1) +
    curve(expand(stochK), '#6b8a1e') + curve(expand(stochD), '#e0583a');
}

// Value scales: labels in the flow, tags on top of them
function drawScale(id, labels, tags, top, height, cls) {
  const text = labels.map(v => `<span>${v}</span>`).join('');
  const marks = tags.map(([value, y, color, dark]) =>
    `<div class="tag ${cls} ${dark ? 'dark' : ''}" style="top:${((y - top) / height * 100).toFixed(2)}%">` +
    `<svg viewBox="0 0 41 13" preserveAspectRatio="none"><path d="M.5 6.500L6.500 .5H41V12.500H6.500z" fill="${color}" stroke="#000"/></svg>` +
    `<span>${value}</span></div>`).join('');
  document.getElementById(id).innerHTML = `<div class="ticks">${text}</div>${marks}`;
}

function drawScales() {
  const prices = [];
  for (let p = 183; p >= 142; p--) prices.push(p + ',00');
  drawScale('scale-price', prices, [['181,75', 33, '#00f000', true], ['171,21', 185, '#4682b4'], ['171,85', 175, '#000'], ['170,31', 197, '#4682b4'], ['159,86', 347, '#3a5cd6', true]], 2, 625, '');
  drawScale('scale-rsi', ['70,00', '60,00', '50,00', '40,00'], [['65,00', 653, '#9acd32'], ['', 679, '#00006e'], ['52,46', 681, '#ff4500'], ['35,00', 719, '#ff0000']], 628, 106, 'short');
  drawScale('scale-macd', ['3,00', '2,00', '1,00', '0,00', '-1,00'], [['', 798, '#00006e'], ['0,00', 800, '#a9a9a9']], 735, 97, 'wide-short');
  drawScale('scale-stoch', ['70,00', '60,00', '50,00', '40,00', '30,00'], [['80,00', 852, '#9acd32'], ['64,97', 867, '#808000'], ['45,13', 886, '#ff4500'], ['20,00', 910, '#9400d3']], 833, 95, 'short');
}

function drawTimeline() {
  const start = dates[0][1];
  const end = 1643;
  document.getElementById('timeline').innerHTML = dates.map(([label, x], n) => {
    const next = n + 1 < dates.length ? dates[n + 1][1] : end;
    return `<span style="width:${((next - x) / (end - start) * 100).toFixed(3)}%">${label}</span>`;
  }).join('');
}

document.getElementById('indicators').innerHTML =
  indicatorButtons.map(([label, cls]) => `<button class="${cls}">${label}</button>`).join('');

drawPrice();
drawRsi();
drawMacd();
drawStoch();
drawScales();
drawTimeline();
```
